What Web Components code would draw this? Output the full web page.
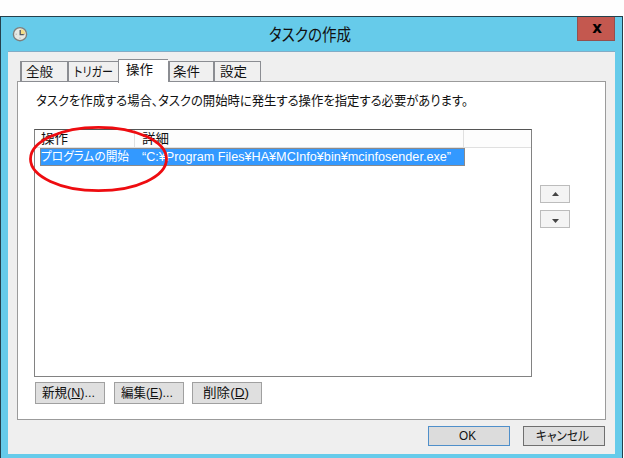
<!DOCTYPE html>
<html lang="ja">
<head>
<meta charset="UTF-8">
<title>タスクの作成</title>
<style>
    body {
        margin: 0;
        width: 624px;
        height: 458px;
        overflow: hidden;
        background: #fefefe;
        font-family: "Liberation Sans", "Noto Sans CJK JP", sans-serif;
        font-size: 13px;
        color: #111;
    }
</style>
</head>
<body>
<task-dialog>
    <fit-text slot="title" width="82" style="font-size: 16.5px">タスクの作成</fit-text>
    <tab-item slot="tabs" style="width: 47px; padding-left: 4px"><fit-text width="27">全般</fit-text></tab-item>
    <tab-item slot="tabs" style="width: 51px; padding-left: 5px"><fit-text width="39">トリガー</fit-text></tab-item>
    <tab-item slot="tabs" style="width: 50px" active><fit-text width="27">操作</fit-text></tab-item>
    <tab-item slot="tabs" style="width: 45px; padding-left: 3px"><fit-text width="27">条件</fit-text></tab-item>
    <tab-item slot="tabs" style="width: 48px; padding-left: 5px"><fit-text width="27">設定</fit-text></tab-item>

    <fit-text slot="message" width="432">タスクを作成する場合、タスクの開始時に発生する操作を指定する必要があります。</fit-text>
    <action-list slot="list">
        <fit-text slot="col1" width="27">操作</fit-text>
        <fit-text slot="col2" width="27">詳細</fit-text>
        <fit-text slot="name" width="88">プログラムの開始</fit-text>
        <fit-text slot="detail" width="309">“C:¥Program Files¥HA¥MCInfo¥bin¥mcinfosender.exe”</fit-text>
    </action-list>
    <arrow-button slot="order" dir="up"></arrow-button>
    <arrow-button slot="order" dir="down"></arrow-button>

    <push-button slot="actions"><fit-text width="53">新規(<u>N</u>)...</fit-text></push-button>
    <push-button slot="actions"><fit-text width="52">編集(<u>E</u>)...</fit-text></push-button>
    <push-button slot="actions"><fit-text width="46">削除(<u>D</u>)</fit-text></push-button>

    <push-button slot="footer" kind="default"><fit-text width="17" style="margin-right: 3px">OK</fit-text></push-button>
    <push-button slot="footer" kind="cancel"><fit-text width="53" style="margin-right: 3px">キャンセル</fit-text></push-button>
</task-dialog>

<script>
// Small helper: shadow root filled from a markup string
function render(el, html) {
    const template = document.createElement('template');
    template.innerHTML = html;
    el.attachShadow({ mode: 'open' }).appendChild(template.content.cloneNode(true));
}

// One line of text condensed to a given width
class FitText extends HTMLElement {
    constructor() {
        super();
        render(this, `
            <style>
                :host { display: block; flex: none; line-height: 18px; white-space: nowrap; }
                span {
                    display: inline-block;
                    vertical-align: top;
                    transform-origin: 0 50%;
                    font-feature-settings: "palt";
                }
            </style>
            <span><slot></slot></span>
        `);
    }

    connectedCallback() {
        const width = Number(this.getAttribute('width'));
        const span = this.shadowRoot.querySelector('span');
        const natural = span.getBoundingClientRect().width;
        span.style.transform = `scaleX(${width / natural})`;
        this.style.width = width + 'px';
    }
}

class TabItem extends HTMLElement {
    constructor() {
        super();
        render(this, `
            <style>
                :host {
                    display: flex;
                    box-sizing: border-box;
                    height: 21px;
                    padding: 1px 0 0 6px;
                    border: 1px solid #8b8d92;
                    border-left-width: 2px;
                    border-right: 0;
                    background: #f0f0f0;
                }
                :host(:last-of-type) { border-right: 1px solid #8b8d92; }
                :host([active]) {
                    height: 24px;
                    padding: 1px 0 0 7px;
                    border-left-width: 1px;
                    border-bottom: 0;
                    background: #fff;
                    margin-bottom: -1px;
                }
            </style>
            <slot></slot>
        `);
    }
}

class PushButton extends HTMLElement {
    constructor() {
        super();
        render(this, `
            <style>
                :host {
                    display: flex;
                    align-items: center;
                    justify-content: center;
                    box-sizing: border-box;
                    width: 70px;
                    height: 22px;
                    padding-right: 3px;
                    border: 1px solid #a0a0a0;
                    background: #dfdfdf;
                }
                :host([kind]) { width: 82px; height: 20px; padding: 0; }
                :host([kind="default"]) { border-color: #4f8fca; background: #dcdcdc; }
                :host([kind="cancel"]) { border-color: #6f6f6f; background: #dedede; }
            </style>
            <slot></slot>
        `);
    }
}

class ArrowButton extends HTMLElement {
    constructor() {
        super();
        const points = this.getAttribute('dir') === 'up' ? '3.5,0 7,4 0,4' : '0,0 7,0 3.5,4';
        render(this, `
            <style>
                :host {
                    display: flex;
                    align-items: center;
                    justify-content: center;
                    box-sizing: border-box;
                    width: 30px;
                    height: 18px;
                    border: 1px solid #bcbcbc;
                    background: #f4f4f4;
                }
                :host([dir="down"]) { padding-top: 3px; }
            </style>
            <svg width="7" height="4"><polygon points="${points}" fill="#444"/></svg>
        `);
    }
}

class ActionList extends HTMLElement {
    constructor() {
        super();
        render(this, `
            <style>
                :host {
                    display: block;
                    position: relative;
                    box-sizing: border-box;
                    width: 498px;
                    height: 248px;
                    border: 1px solid #828282;
                    border-top-color: #555;
                    background: #fff;
                }
                .row { display: grid; grid-template-columns: 100px 324px; margin-left: 5px; }
                .header {
                    height: 18px;
                    box-sizing: border-box;
                    border-bottom: 1px solid #e0e0e0;
                    background: #fdfdfd;
                    margin-left: 0;
                    padding-left: 5px;
                }
                .header div { padding-left: 1px; border-right: 1px solid #e0e0e0; }
                .header div:first-child { margin-right: 5px; }
                .header div + div { padding-left: 2px; }
                .selected {
                    box-sizing: border-box;
                    width: 425px;
                    height: 18px;
                    border: 1px solid #8a8a8c;
                    background: #3399ff;
                    color: #fff;
                    font-size: 12.5px;
                }
                .selected div { margin-top: -1px; }
                .selected div + div { padding-left: 1px; }
                /* red mark around the first cell */
                svg { position: absolute; left: -7px; top: -5px; }
            </style>
            <div class="row header">
                <div><slot name="col1"></slot></div>
                <div><slot name="col2"></slot></div>
            </div>
            <div class="row selected">
                <div><slot name="name"></slot></div>
                <div><slot name="detail"></slot></div>
            </div>
            <svg width="142" height="68">
                <ellipse cx="70.5" cy="34" rx="68" ry="31.7" fill="none" stroke="#ee0c10" stroke-width="2.8"/>
            </svg>
        `);
    }
}

class TaskDialog extends HTMLElement {
    constructor() {
        super();
        render(this, `
            <style>
                :host {
                    display: flex;
                    flex-direction: column;
                    box-sizing: border-box;
                    width: 623px;
                    height: 442px;
                    margin-top: 16px;
                    padding: 0 7px 4px;
                    border: 1px solid #24404c;
                    border-bottom: 0;
                    background: #66cbea;
                }
                .titlebar {
                    display: grid;
                    grid-template-columns: 257px 1fr 38px;
                    height: 34px;
                    padding-left: 4px;
                }
                .clock { margin-top: 9px; }
                .title { padding-top: 9px; }
                .close {
                    display: flex;
                    align-items: center;
                    justify-content: center;
                    box-sizing: border-box;
                    height: 24px;
                    border: 1px solid #94504e;
                    border-top: 0;
                    background: #c4584f;
                    font: bold 15px "DejaVu Sans", sans-serif;
                    color: #000;
                    padding: 0 0 1px 2px;
                }
                .client {
                    flex: 1;
                    display: flex;
                    flex-direction: column;
                    box-sizing: border-box;
                    padding: 7px 9px 8px;
                    border-top: 1px solid #82acc6;
                    background: #efefef;
                    color: #111;
                }
                .tabs { display: flex; align-items: flex-end; height: 23px; padding-left: 3px; position: relative; margin-bottom: -1px; }
                .page {
                    box-sizing: border-box;
                    width: 589px;
                    height: 339px;
                    padding: 10px 0 0 17px;
                    border: 1px solid #9b9b9b;
                    background: #fff;
                }
                .message { padding-left: 1px; height: 37px; }
                .middle { display: flex; gap: 8px; margin-left: -1px; }
                .order { display: flex; flex-direction: column; gap: 7px; padding-top: 56px; }
                .actions { display: flex; gap: 8.6px; margin-top: 5px; }
                .footer { display: flex; justify-content: flex-end; gap: 13px; margin: 6px 1px 0 0; }
            </style>
            <div class="titlebar">
                <svg class="clock" width="17" height="17" viewBox="0 0 17 17">
                    <circle cx="8" cy="8.2" r="6.6" fill="#e6e9e4" stroke="#7d7f7c" stroke-width="1.4"/>
                    <path d="M8.5 3A5 5 0 0 1 13.2 8H8.5Z" fill="#f3dc86"/>
                    <path d="M8.2 4v4.7h3.6" fill="none" stroke="#505860" stroke-width="1.3"/>
                    <path d="M3.7 8.2h1M8 11.6v1M11.8 8.2h1" stroke="#9ba3a7" stroke-width="1"/>
                </svg>
                <div class="title"><slot name="title"></slot></div>
                <div class="close">x</div>
            </div>
            <div class="client">
                <div class="tabs"><slot name="tabs"></slot></div>
                <div class="page">
                    <div class="message"><slot name="message"></slot></div>
                    <div class="middle">
                        <slot name="list"></slot>
                        <div class="order"><slot name="order"></slot></div>
                    </div>
                    <div class="actions"><slot name="actions"></slot></div>
                </div>
                <div class="footer"><slot name="footer"></slot></div>
            </div>
        `);
    }
}

customElements.define('task-dialog', TaskDialog);
customElements.define('tab-item', TabItem);
customElements.define('action-list', ActionList);
customElements.define('arrow-button', ArrowButton);
customElements.define('push-button', PushButton);
customElements.define('fit-text', FitText);
</script>
</body>
</html>
